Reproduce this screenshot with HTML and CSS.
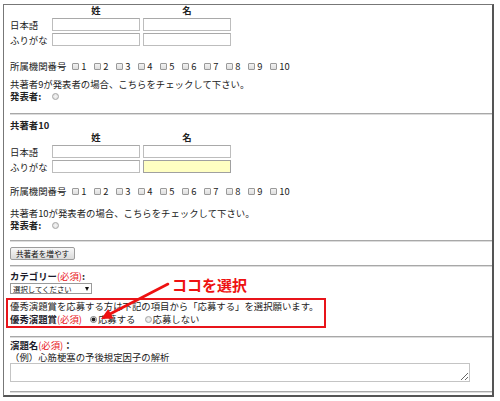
FILE: index.html
```html
<!DOCTYPE html>
<html lang="ja">
<head>
<meta charset="utf-8">
<title>共著者登録</title>
<link rel="stylesheet" href="styles.css">
</head>
<body>
<div class="page">
  <div class="frame">
    <section class="author">
      <div class="names">
        <span></span><span class="nh">姓</span><span class="nh">名</span>
        <span class="lbl">日本語</span><input class="tx" type="text"><input class="tx" type="text">
        <span class="lbl">ふりがな</span><input class="tx" type="text"><input class="tx" type="text">
      </div>
      <div class="aff aff1">
        <span>所属機関番号</span>
        <span class="opts">
          <label class="opt"><input type="checkbox" class="cb">1</label>
          <label class="opt"><input type="checkbox" class="cb">2</label>
          <label class="opt"><input type="checkbox" class="cb">3</label>
          <label class="opt"><input type="checkbox" class="cb">4</label>
          <label class="opt"><input type="checkbox" class="cb">5</label>
          <label class="opt"><input type="checkbox" class="cb">6</label>
          <label class="opt"><input type="checkbox" class="cb">7</label>
          <label class="opt"><input type="checkbox" class="cb">8</label>
          <label class="opt"><input type="checkbox" class="cb">9</label>
          <label class="opt"><input type="checkbox" class="cb">10</label>
        </span>
      </div>
      <p class="note note1">共著者9が発表者の場合、こちらをチェックして下さい。</p>
      <div class="presenter"><b>発表者:</b><input type="radio" class="rd"></div>
    </section>
    <hr class="sep sep1">
    <section class="author">
      <h3 class="title">共著者10</h3>
      <div class="names">
        <span></span><span class="nh">姓</span><span class="nh">名</span>
        <span class="lbl">日本語</span><input class="tx" type="text"><input class="tx" type="text">
        <span class="lbl">ふりがな</span><input class="tx" type="text"><input class="tx hl" type="text">
      </div>
      <div class="aff aff2">
        <span>所属機関番号</span>
        <span class="opts">
          <label class="opt"><input type="checkbox" class="cb">1</label>
          <label class="opt"><input type="checkbox" class="cb">2</label>
          <label class="opt"><input type="checkbox" class="cb">3</label>
          <label class="opt"><input type="checkbox" class="cb">4</label>
          <label class="opt"><input type="checkbox" class="cb">5</label>
          <label class="opt"><input type="checkbox" class="cb">6</label>
          <label class="opt"><input type="checkbox" class="cb">7</label>
          <label class="opt"><input type="checkbox" class="cb">8</label>
          <label class="opt"><input type="checkbox" class="cb">9</label>
          <label class="opt"><input type="checkbox" class="cb">10</label>
        </span>
      </div>
      <p class="note note2">共著者10が発表者の場合、こちらをチェックして下さい。</p>
      <div class="presenter"><b>発表者:</b><input type="radio" class="rd"></div>
    </section>
    <hr class="sep sep2">
    <div class="addrow"><button class="btn" type="button">共著者を増やす</button></div>
    <hr class="sep sep3">
    <div class="cat">
      <div class="line"><b class="lab">カテゴリー</b><span class="req">(必須)</span><b>:</b></div>
      <span class="selwrap"><select class="sel"><option>選択してください</option></select></span>
    </div>
    <div class="award">
      <p class="line">優秀演題賞を応募する方は下記の項目から「応募する」を選択願います。</p>
      <div class="line awardrow">
        <b class="lab">優秀演題賞</b><span class="req">(必須)</span>
        <label class="ro r1"><input type="radio" name="aw" class="rd" checked>応募する</label>
        <label class="ro r2"><input type="radio" name="aw" class="rd">応募しない</label>
      </div>
    </div>
    <hr class="sep sep4">
    <div class="titlefield">
      <div class="line2"><b class="lab">演題名</b><span class="req">(必須)</span><b>：</b></div>
      <div class="line2">（例）心筋梗塞の予後規定因子の解析</div>
      <textarea class="ta"></textarea>
    </div>
    <hr class="sep sep5">
  </div>

  <span class="callout">ココを選択</span>
  <svg class="arrow" width="500" height="401" viewBox="0 0 500 401" aria-hidden="true">
    <line x1="168" y1="284" x2="110" y2="314" stroke="#ee1111" stroke-width="2.6" stroke-linecap="round"/>
    <polygon points="101,319 113.4,318.6 108.2,309" fill="#ee1111"/>
  </svg>
</div>
</body>
</html>
```

FILE: styles.css
```css
* { box-sizing: border-box; }
html, body { margin: 0; padding: 0; background: #fff; }
body {
  font-family: "Noto Sans CJK JP", "Noto Sans", sans-serif;
  font-size: 9.4px;
  line-height: 12px;
  color: #222;
}
p, h3 { margin: 0; }
b, h3 { font-weight: bold; }

.page { position: relative; width: 500px; height: 401px; overflow: hidden; }

.frame {
  margin: 4px 0 0 3px;
  width: 491px;
  border: 1px solid #777;
  border-right: 2px solid #555;
  border-bottom: 2px solid #555;
  padding: 0 0 2px 6px;
}

.names {
  display: grid;
  grid-template-columns: 39px 88px 88px;
  grid-template-rows: 11px 13px 13px;
  column-gap: 3px;
  row-gap: 2px;
  align-items: center;
}
.nh { text-align: center; font-weight: bold; line-height: 11px; }
.lbl { white-space: nowrap; line-height: 12px; }
.tx {
  width: 88px; height: 13px; margin: 0; padding: 0 2px;
  border: 1px solid #bdbdbd; border-top-color: #a9a9a9;
  background: #fff; font: inherit; outline: none;
}
.tx.hl { background: #ffffc2; border-color: #a0a0a0; }

.aff { display: flex; align-items: center; height: 12px; }
.aff1 { margin-top: 14px; }
.aff2 { margin-top: 12px; }
.opts { display: flex; margin-left: 6px; }
.opt { display: flex; align-items: center; width: 22px; }
.cb {
  -webkit-appearance: none; appearance: none;
  width: 7px; height: 7px; margin: 0 2px 0 0;
  border: 1px solid #9a9a9a; border-radius: 1px;
  background: linear-gradient(#f2f2f2, #dedede);
}

.note1 { margin-top: 6px; }
.note2 { margin-top: 10px; }
.presenter { display: flex; align-items: center; height: 12px; }
.presenter .rd { margin-left: 11px; }

.rd {
  -webkit-appearance: none; appearance: none;
  width: 7px; height: 7px; margin: 0; border-radius: 50%;
  border: 1px solid #a5a5a5;
  background: radial-gradient(circle, #f4f4f4 0, #dcdcdc 100%);
}
.rd:checked {
  border-color: #777;
  background: radial-gradient(circle, #222 0 1.6px, #e6e6e6 2.2px);
}

.sep {
  height: 0; margin: 0;
  border: 0; border-top: 1px solid #a8a8a8; border-bottom: 1px solid #dcdcdc;
}
.sep1 { margin-top: 11px; }
.sep2 { margin-top: 9px; }
.sep3 { margin-top: 5px; }
.sep4 { margin-top: 8px; }
.sep5 { margin-top: 9px; }

.title { font-size: 9.4px; line-height: 12px; margin-top: 4px; }
.author .title + .names { margin-top: 1px; }

.addrow { margin-top: 5px; height: 13px; }
.btn {
  display: block; height: 13px; width: 65px; margin: 0; padding: 0;
  font-family: inherit; font-size: 7.6px; line-height: 11px; color: #111;
  border: 1px solid #9c9c9c; border-radius: 2px;
  background: linear-gradient(#f7f7f7, #dadada);
}

.cat { margin-top: 3px; }
.lab { color: #1a1a2a; }
.req { color: #e8141a; }
.selwrap { position: relative; display: block; width: 82px; height: 11px; margin-top: 1px; }
.sel {
  -webkit-appearance: none; appearance: none;
  display: block; width: 82px; height: 11px; margin: 0; padding: 0 0 0 2px;
  font-family: inherit; font-size: 7.4px; line-height: 9px; color: #111;
  border: 1px solid #9a9a9a; border-radius: 0; background: #fff;
}
.selwrap::after {
  content: ""; position: absolute; left: 75px; top: 4px;
  border-left: 2.5px solid transparent; border-right: 2.5px solid transparent;
  border-top: 4px solid #111;
}

.award {
  margin: 4px 0 0 -4px;
  width: 320px;
  border: 2px solid #e8141a;
  padding: 0 0 1px 2px;
}
.award .line + .line { margin-top: 1px; }
.awardrow { display: flex; align-items: center; }
.ro { display: flex; align-items: center; }
.r1 { margin-left: 8px; }
.r2 { margin-left: 9px; }
.ro .rd { margin-right: 1px; }

.titlefield { margin-top: 1px; line-height: 12px; }
.line2 { height: 12px; }
.ta {
  display: block; width: 460px; height: 19px; margin: 0;
  border: 1px solid #c4c4c4; font: inherit; padding: 1px 2px;
}

.callout {
  position: absolute; left: 172px; top: 276px;
  font-size: 15px; line-height: 17px; font-weight: bold; color: #ee1111;
  letter-spacing: 0;
}
.arrow { position: absolute; left: 0; top: 0; pointer-events: none; }
```
